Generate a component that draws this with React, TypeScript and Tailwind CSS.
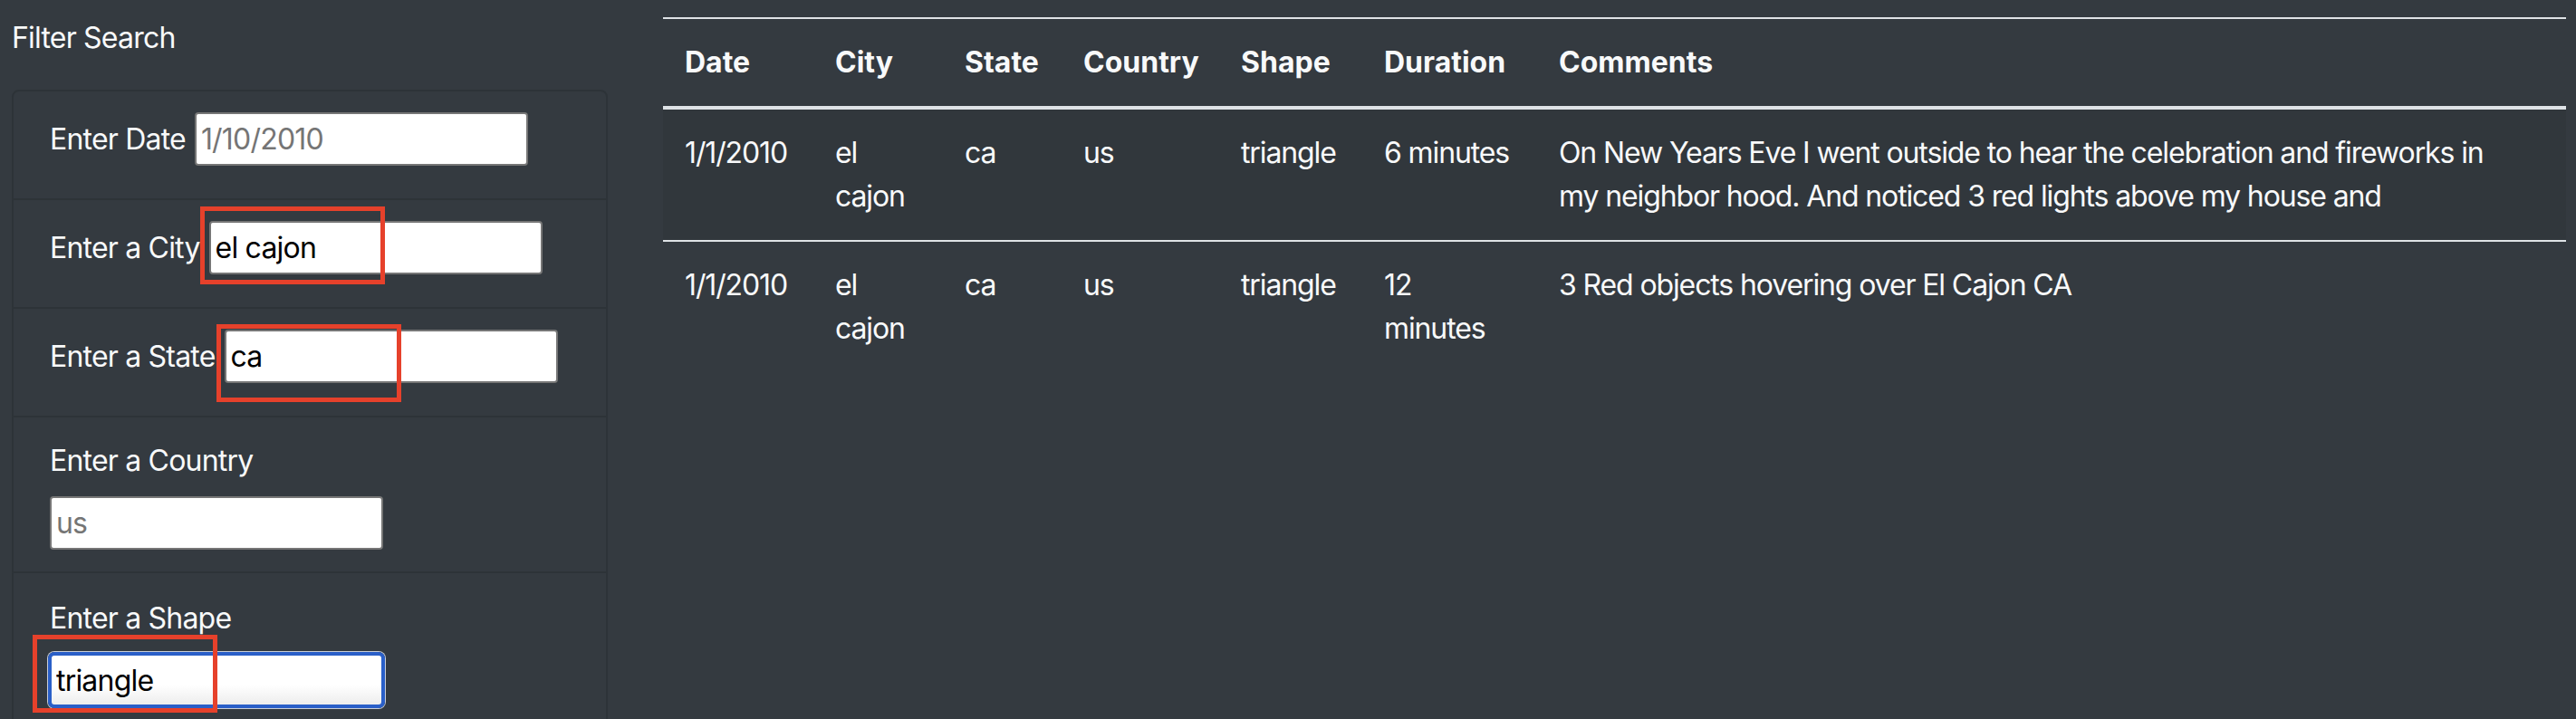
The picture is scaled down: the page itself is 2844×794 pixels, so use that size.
// UFO sightings filter page — dark bootstrap-like layout, annotated inputs
import React from "react";

type Sighting = {
  date: string;
  city: string;
  state: string;
  country: string;
  shape: string;
  duration: string;
  comments: string;
};

const SIGHTINGS: Sighting[] = [
  {
    date: "1/1/2010",
    city: "el cajon",
    state: "ca",
    country: "us",
    shape: "triangle",
    duration: "6 minutes",
    comments:
      "On New Years Eve I went outside to hear the celebration and fireworks in my neighbor hood. And noticed 3 red lights above my house and",
  },
  {
    date: "1/1/2010",
    city: "el cajon",
    state: "ca",
    country: "us",
    shape: "triangle",
    duration: "12 minutes",
    comments: "3 Red objects hovering over El Cajon CA",
  },
];

const HEADERS = ["Date", "City", "State", "Country", "Shape", "Duration", "Comments"];

// red annotation rectangle drawn over a screenshot
function Marker({ className }: { className: string }) {
  return (
    <span
      className={`pointer-events-none absolute h-[86px] w-[204px] border-[5px] border-[#e6412b] ${className}`}
    />
  );
}

function TextInput({ value, placeholder }: { value?: string; placeholder?: string }) {
  return (
    <input
      type="text"
      defaultValue={value}
      placeholder={placeholder}
      className="h-[59px] w-[368px] rounded-[4px] border-2 border-[#767676] bg-white px-[5px] text-[32px] leading-[38px] text-black outline-none placeholder:text-[#757575]"
    />
  );
}

export default function App() {
  return (
    <div className="relative h-[794px] w-[2844px] overflow-hidden bg-[#343a40] font-[Inter,'Liberation_Sans',sans-serif] text-[32px] leading-[48px] tracking-[-0.025em] text-[#f8f9fa]">
      <div className="flex">
        {/* ─── Filtros ─────────────────────────────── */}
        <aside className="w-[671px] shrink-0 pl-[13px]">
          <h5 className="pt-[18px] font-normal">Filter Search</h5>
          <ul className="mt-[33px] rounded-[8px] border-2 border-[#2d3338]">
            <li className="flex items-center gap-[10px] px-[40px] pb-[36px] pt-[23px]">
              <label>Enter Date</label>
              <TextInput placeholder="1/10/2010" />
            </li>
            <li className="flex items-center gap-[10px] border-t-2 border-[#2d3338] px-[40px] pb-[36px] pt-[23px]">
              <label>Enter a City</label>
              <div className="relative">
                <TextInput value="el cajon" />
                <Marker className="-left-[10px] -top-[16px]" />
              </div>
            </li>
            <li className="flex items-center gap-[10px] border-t-2 border-[#2d3338] px-[40px] pb-[36px] pt-[23px]">
              <label>Enter a State</label>
              <div className="relative">
                <TextInput value="ca" />
                <Marker className="-left-[9px] -top-[6px]" />
              </div>
            </li>
            <li className="border-t-2 border-[#2d3338] px-[40px] pb-[24px] pt-[24px]">
              <label className="block">Enter a Country</label>
              <div className="mt-[15px]">
                <TextInput placeholder="us" />
              </div>
            </li>
            <li className="border-t-2 border-[#2d3338] px-[38px] pb-[24px] pt-[26px]">
              <label className="block pl-[2px]">Enter a Shape</label>
              <div className="relative mt-[13px] w-[372px]">
                {/* estado con foco: anillo azul */}
                <input
                  type="text"
                  defaultValue="triangle"
                  className="h-[62px] w-[372px] rounded-[7px] border-[4px] border-[#2a5fc8] bg-gradient-to-b from-white from-60% to-[#ededed] px-[5px] text-[32px] text-black shadow-[0_0_0_1px_#c9ced6] outline-none"
                />
                <Marker className="-left-[17px] -top-[19px]" />
              </div>
            </li>
          </ul>
        </aside>

        {/* ─── Resultados ──────────────────────────── */}
        <main className="ml-[61px] mr-[11px] flex-1 pt-[19px]">
          <table className="w-full table-fixed border-collapse text-left">
            <colgroup>
              <col className="w-[166px]" />
              <col className="w-[143px]" />
              <col className="w-[131px]" />
              <col className="w-[174px]" />
              <col className="w-[158px]" />
              <col className="w-[193px]" />
              <col />
            </colgroup>
            <thead>
              <tr>
                {HEADERS.map((h) => (
                  <th
                    key={h}
                    className="border-b-4 border-t-2 border-[#dee2e6] p-[24px] align-bottom font-bold tracking-normal"
                  >
                    {h}
                  </th>
                ))}
              </tr>
            </thead>
            <tbody>
              {SIGHTINGS.map((s, i) => (
                <tr key={i} className={i % 2 === 0 ? "bg-black/5" : ""}>
                  {[s.date, s.city, s.state, s.country, s.shape, s.duration].map((v, j) => (
                    <td
                      key={j}
                      className="border-t-2 border-[#dee2e6] p-[24px] align-top tracking-[-0.035em]"
                    >
                      {v}
                    </td>
                  ))}
                  <td className="border-t-2 border-[#dee2e6] py-[24px] pl-[24px] pr-[44px] align-top tracking-[-0.035em]">
                    {s.comments}
                  </td>
                </tr>
              ))}
            </tbody>
          </table>
        </main>
      </div>
    </div>
  );
}
